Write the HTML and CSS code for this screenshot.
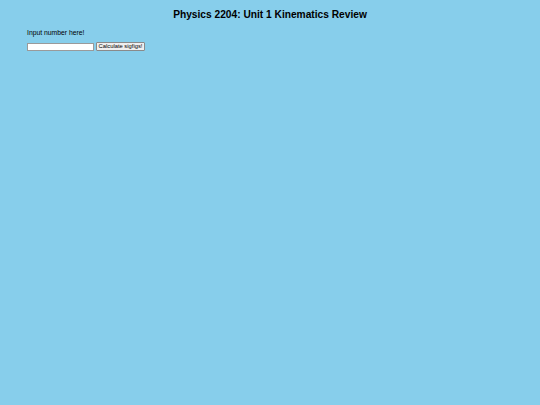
FILE: index.html
```html
<!DOCTYPE html>
<html lang="en">

<head>
    <meta charset="UTF-8">
    <meta name="viewport" content="width=device-width, initial-scale=1.0">
    <title>Physics 2204: Unit 1 Kinematics Review</title>
    <link rel="stylesheet" href="styles.css">
</head>

<body>
    <h1 class="title">Physics 2204: Unit 1 Kinematics Review</h1>

    <div class="sigfigs">
        <p class="prompt">Input number here!</p>
        <div class="row">
            <input type="text" id="number" class="numberInput">
            <button class="calcButton">Calculate sigfigs!</button>
        </div>
    </div>
</body>

</html>
```

FILE: styles.css
```css
body {
    margin: 0;
    padding: 9px 27px;
    background-color: #87ceeb;
    font-family: 'Liberation Sans', Arial, sans-serif;
    font-size: 6.8px;
    color: #000000;
}

.title {
    margin: 0;
    text-align: center;
    font-size: 10.2px;
    font-weight: bold;
}

.prompt {
    margin: 9px 0 6px 0;
}

.row {
    display: flex;
    align-items: center;
    gap: 2px;
}

.numberInput {
    width: 67px;
    height: 8px;
    padding: 0;
    margin: 0;
    border: 1px solid #9a9a9a;
    background-color: #ffffff;
    box-sizing: border-box;
}

.calcButton {
    height: 9px;
    width: 49px;
    padding: 0;
    margin: 0;
    font-family: 'Liberation Sans', Arial, sans-serif;
    font-size: 5.8px;
    line-height: 1;
    border: 1px solid #8a8a8a;
    border-radius: 1px;
    background-color: #efefef;
    box-sizing: border-box;
}
```
